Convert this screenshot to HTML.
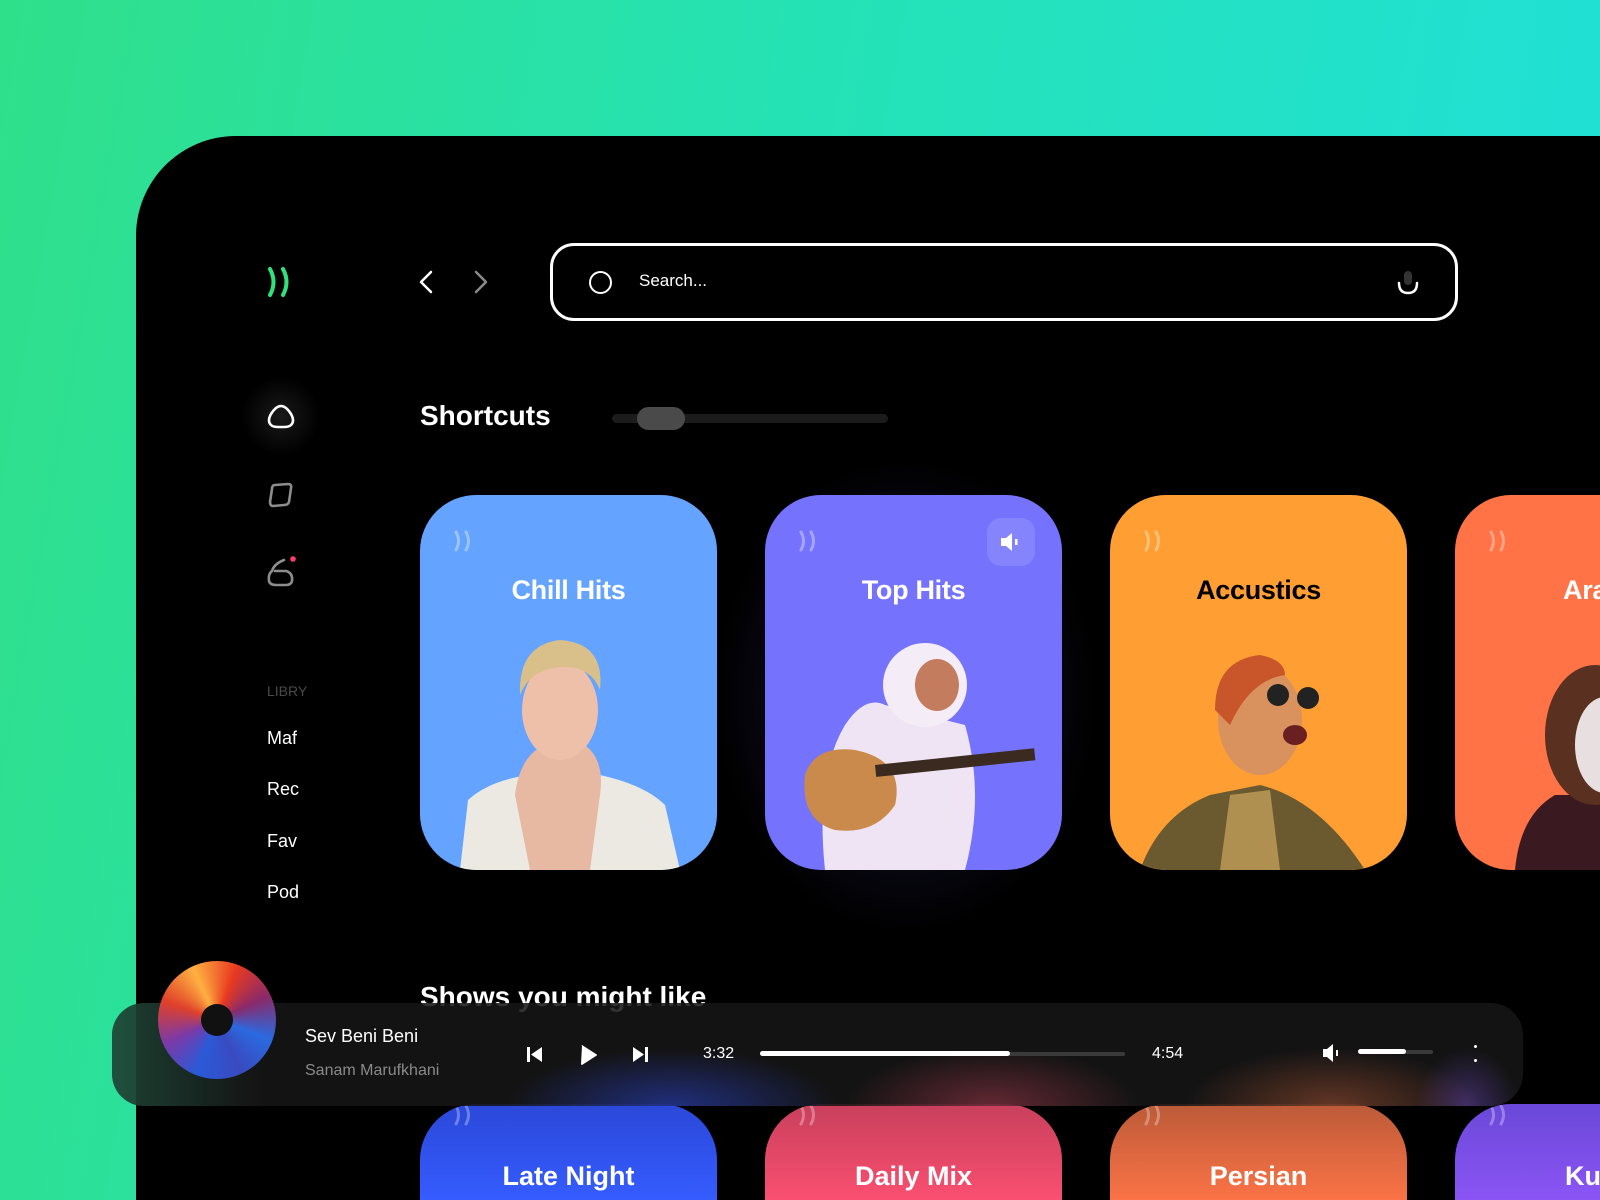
<!DOCTYPE html>
<html style="width:1600px;height:1200px;overflow:hidden"><head><meta charset="utf-8"><style>
*{margin:0;padding:0;box-sizing:border-box}
body{width:1600px;height:1200px;overflow:hidden;position:relative;background:linear-gradient(100deg,#2fe08a 0%,#25e2b5 45%,#1fe0dc 100%);font-family:"Liberation Sans",sans-serif}
.panel{position:absolute;left:136px;top:136px;width:1464px;height:1064px;background:#000;border-radius:100px 0 0 0;overflow:hidden}
.abs{position:absolute}
.card{position:absolute;top:359px;width:297px;height:375px;border-radius:56px;overflow:hidden}
.card h3{position:absolute;left:0;right:0;top:80px;text-align:center;color:#fff;font-size:27px;font-weight:bold;letter-spacing:-0.3px}
.card .w{position:absolute;left:32px;top:34px}
.bc{position:absolute;top:968px;width:297px;height:96px;border-radius:56px 56px 0 0;overflow:hidden}
.bc h3{position:absolute;left:0;right:0;top:57px;text-align:center;color:#fff;font-size:27px;font-weight:bold}
.bc .w{position:absolute;left:32px;top:-1px}
.lib{position:absolute;left:131px;color:#fff;font-size:18px}
</style></head><body>
<div class="panel">
 <svg class="abs" style="left:125px;top:130px" width="40" height="32" viewBox="0 0 40 32"><path d="M9 3 Q16 16 9 29" stroke="#2fe27e" stroke-width="4" fill="none" stroke-linecap="round"/><path d="M22 3 Q29 16 22 29" stroke="#2fe27e" stroke-width="4" fill="none" stroke-linecap="round"/></svg>
 <svg class="abs" style="left:280px;top:134px" width="80" height="24" viewBox="0 0 80 24"><path d="M15 2 L5 12 L15 22" stroke="#fff" stroke-width="2.5" fill="none" stroke-linecap="round" stroke-linejoin="round"/><path d="M60 2 L70 12 L60 22" stroke="#8a8a8a" stroke-width="2.5" fill="none" stroke-linecap="round" stroke-linejoin="round"/></svg>
 <div class="abs" style="left:414px;top:107px;width:908px;height:78px;border:3px solid #fff;border-radius:24px"></div>
 <div class="abs" style="left:453px;top:135px;width:23px;height:23px;border:2.5px solid #fff;border-radius:50%"></div>
 <div class="abs" style="left:503px;top:135px;color:#fff;font-size:17px">Search...</div>
 <svg class="abs" style="left:1259px;top:133px" width="26" height="28" viewBox="0 0 26 28"><rect x="9" y="2" width="8" height="14" rx="4" fill="#333"/><path d="M4 14 Q4 24 13 24 Q22 24 22 14" stroke="#fff" stroke-width="2.5" fill="none" stroke-linecap="round"/></svg>
 <div class="abs" style="left:105px;top:240px;width:80px;height:80px;border-radius:50%;background:radial-gradient(circle,rgba(255,255,255,.10),rgba(255,255,255,0) 70%)"></div>
 <svg class="abs" style="left:130px;top:266px" width="30" height="30" viewBox="0 0 30 30"><path d="M15 4 Q20 4 25 12 Q29 19 25 23 Q23 25 18 25 L12 25 Q7 25 5 23 Q1 19 5 12 Q10 4 15 4Z" stroke="#fff" stroke-width="2.6" fill="none"/></svg>
 <svg class="abs" style="left:130px;top:344px" width="30" height="30" viewBox="0 0 30 30"><path d="M9 5 L22 4 Q26 4 25 8 L23 22 Q22 25 18 25 L7 26 Q4 26 4 22 L6 9 Q6 5 9 5Z" stroke="#8d8d8d" stroke-width="2.6" fill="none"/></svg>
 <svg class="abs" style="left:128px;top:418px" width="36" height="36" viewBox="0 0 36 36"><path d="M20 6 Q10 10 8 17 Q4 20 5 27 Q6 31 12 31 L22 31 Q27 31 28 27 Q29 19 22 17 L11 17" stroke="#8d8d8d" stroke-width="2.6" fill="none" stroke-linecap="round"/><circle cx="29" cy="5" r="2.8" fill="#ff3d6e"/></svg>
 <div class="lib" style="top:547px;color:#4a4a4a;font-size:14px">LIBRY</div>
 <div class="lib" style="top:592px">Maf</div>
 <div class="lib" style="top:643px">Rec</div>
 <div class="lib" style="top:695px">Fav</div>
 <div class="lib" style="top:746px">Pod</div>
 <div class="abs" style="left:284px;top:264px;color:#fff;font-size:28px;font-weight:bold">Shortcuts</div>
 <div class="abs" style="left:476px;top:278px;width:276px;height:9px;border-radius:5px;background:#1c1c1c"></div>
 <div class="abs" style="left:501px;top:271px;width:48px;height:23px;border-radius:12px;background:#4a4a4a"></div>
 <div class="abs" style="left:560px;top:300px;width:420px;height:520px;border-radius:60px;background:radial-gradient(ellipse,rgba(110,100,255,.22),rgba(0,0,0,0) 65%)"></div>
 <div class="card" style="left:284px;background:#64a3ff">
  <svg class="w" width="24" height="24" viewBox="0 0 24 24"><path d="M4 3 Q9 12 4 21 M14 3 Q19 12 14 21" stroke="rgba(255,255,255,.35)" stroke-width="3" fill="none" stroke-linecap="round"/></svg>
  <h3>Chill Hits</h3>
  <svg class="abs" style="left:0;top:0" width="297" height="375" viewBox="0 0 297 375">
   <path d="M40 375 L48 305 Q70 285 110 280 L180 280 Q225 290 245 310 L260 375Z" fill="#ece9e2"/>
   <path d="M95 300 Q100 260 125 250 L165 250 Q185 265 180 300 L170 375 L110 375Z" fill="#e7b8a2"/>
   <ellipse cx="140" cy="215" rx="38" ry="50" fill="#eec0aa"/>
   <path d="M100 200 Q98 150 140 145 Q185 148 180 195 Q170 170 140 172 Q110 175 100 200Z" fill="#d9c08a"/>
  </svg>
 </div>
 <div class="card" style="left:629px;background:#7573fd">
  <svg class="w" width="24" height="24" viewBox="0 0 24 24"><path d="M4 3 Q9 12 4 21 M14 3 Q19 12 14 21" stroke="rgba(255,255,255,.35)" stroke-width="3" fill="none" stroke-linecap="round"/></svg>
  <div class="abs" style="left:222px;top:23px;width:48px;height:48px;border-radius:14px;background:rgba(255,255,255,.12)"></div>
  <svg class="abs" style="left:233px;top:35px" width="26" height="24" viewBox="0 0 26 24"><path d="M3 8 H8 L14 3 V21 L8 16 H3Z" fill="#fff"/><rect x="17" y="9" width="2.5" height="6" fill="#fff"/></svg>
  <h3>Top Hits</h3>
  <svg class="abs" style="left:0;top:0" width="297" height="375" viewBox="0 0 297 375">
   <path d="M60 375 Q50 280 80 230 Q100 200 120 210 L200 230 Q220 300 200 375Z" fill="#efe4f4"/>
   <circle cx="160" cy="190" r="42" fill="#f4ecf6"/>
   <ellipse cx="172" cy="190" rx="22" ry="26" fill="#c47c5e"/>
   <path d="M40 280 Q50 250 90 255 Q140 265 130 310 Q110 340 70 335 Q35 325 40 280Z" fill="#c98a4c"/>
   <rect x="110" y="270" width="160" height="12" fill="#3a2a20" transform="rotate(-6 110 270)"/>
  </svg>
 </div>
 <div class="card" style="left:974px;background:#ff9f33">
  <svg class="w" width="24" height="24" viewBox="0 0 24 24"><path d="M4 3 Q9 12 4 21 M14 3 Q19 12 14 21" stroke="rgba(255,255,255,.35)" stroke-width="3" fill="none" stroke-linecap="round"/></svg>
  <h3 style="color:#000">Accustics</h3>
  <svg class="abs" style="left:0;top:0" width="297" height="375" viewBox="0 0 297 375">
   <path d="M30 375 Q50 320 100 300 L150 290 Q210 305 255 375Z" fill="#6b5a30"/>
   <path d="M120 300 L160 295 L170 375 L110 375Z" fill="#b09050"/>
   <ellipse cx="150" cy="225" rx="42" ry="55" fill="#d9925e"/>
   <path d="M105 215 Q105 165 150 160 Q175 165 175 180 Q140 185 120 230Z" fill="#c9562a"/>
   <circle cx="168" cy="200" r="11" fill="#222"/><circle cx="198" cy="203" r="11" fill="#222"/>
   <ellipse cx="185" cy="240" rx="12" ry="10" fill="#6a2020"/>
  </svg>
 </div>
 <div class="card" style="left:1319px;background:#ff7346">
  <svg class="w" width="24" height="24" viewBox="0 0 24 24"><path d="M4 3 Q9 12 4 21 M14 3 Q19 12 14 21" stroke="rgba(255,255,255,.35)" stroke-width="3" fill="none" stroke-linecap="round"/></svg>
  <h3 style="left:108px;text-align:left">Arabic</h3>
  <svg class="abs" style="left:0;top:0" width="297" height="375" viewBox="0 0 297 375">
   <path d="M60 375 Q65 320 100 300 L160 300 L170 375Z" fill="#3a1a20"/>
   <ellipse cx="140" cy="240" rx="50" ry="70" fill="#5a3020"/>
   <ellipse cx="150" cy="250" rx="30" ry="48" fill="#e8e0e0"/>
  </svg>
 </div>
 <div class="abs" style="left:284px;top:845px;color:#fff;font-size:28px;font-weight:bold">Shows you might like</div>
 <div class="bc" style="left:284px;background:linear-gradient(#2b48d8,#355cff)"><svg class="w" width="24" height="24" viewBox="0 0 24 24"><path d="M4 3 Q9 12 4 21 M14 3 Q19 12 14 21" stroke="rgba(255,255,255,.3)" stroke-width="3" fill="none" stroke-linecap="round"/></svg><h3>Late Night</h3></div>
 <div class="bc" style="left:629px;background:linear-gradient(#c8405c,#fa4f70)"><svg class="w" width="24" height="24" viewBox="0 0 24 24"><path d="M4 3 Q9 12 4 21 M14 3 Q19 12 14 21" stroke="rgba(255,255,255,.3)" stroke-width="3" fill="none" stroke-linecap="round"/></svg><h3>Daily Mix</h3></div>
 <div class="bc" style="left:974px;background:linear-gradient(#bb5a38,#fb7346)"><svg class="w" width="24" height="24" viewBox="0 0 24 24"><path d="M4 3 Q9 12 4 21 M14 3 Q19 12 14 21" stroke="rgba(255,255,255,.3)" stroke-width="3" fill="none" stroke-linecap="round"/></svg><h3>Persian</h3></div>
 <div class="bc" style="left:1319px;background:linear-gradient(#6a48d8,#8b55f5)"><svg class="w" width="24" height="24" viewBox="0 0 24 24"><path d="M4 3 Q9 12 4 21 M14 3 Q19 12 14 21" stroke="rgba(255,255,255,.3)" stroke-width="3" fill="none" stroke-linecap="round"/></svg><h3 style="left:110px;text-align:left">Kurdish</h3></div>
</div>
<div class="abs" style="left:112px;top:1003px;width:1411px;height:103px;border-radius:32px;background:rgba(22,22,22,.88);overflow:hidden">
 <div class="abs" style="left:0;top:0;width:150px;height:103px;background:linear-gradient(90deg,rgba(40,120,90,.45),rgba(0,0,0,0))"></div>
 <div class="abs" style="left:380px;top:40px;width:360px;height:63px;background:radial-gradient(ellipse at 50% 100%,rgba(50,80,255,.45),rgba(0,0,0,0) 65%)"></div>
 <div class="abs" style="left:720px;top:40px;width:320px;height:63px;background:radial-gradient(ellipse at 50% 100%,rgba(250,80,110,.35),rgba(0,0,0,0) 65%)"></div>
 <div class="abs" style="left:1060px;top:40px;width:320px;height:63px;background:radial-gradient(ellipse at 50% 100%,rgba(250,120,70,.35),rgba(0,0,0,0) 65%)"></div>
 <div class="abs" style="left:1300px;top:40px;width:111px;height:63px;background:radial-gradient(ellipse at 50% 100%,rgba(140,90,250,.35),rgba(0,0,0,0) 65%)"></div>
</div>
<div class="abs" style="left:158px;top:961px;width:118px;height:118px;border-radius:50%;background:conic-gradient(from 200deg,#2a5ad8,#7a3aa8,#e0402a,#ffb040,#e83a20,#8a2a6a,#2a6ae0,#3a4ac0,#2a5ad8)"></div>
<div class="abs" style="left:201px;top:1004px;width:32px;height:32px;border-radius:50%;background:#111"></div>
<div class="abs" style="left:305px;top:1026px;color:#fff;font-size:18px">Sev Beni Beni</div>
<div class="abs" style="left:305px;top:1062px;color:#8a8a8a;font-size:16px">Sanam Marufkhani</div>
<svg class="abs" style="left:524px;top:1044px" width="130" height="22" viewBox="0 0 130 22"><rect x="3" y="3" width="3" height="15" fill="#fff"/><path d="M18 3 L7 10.5 L18 18Z" fill="#fff"/><path d="M58 2 Q57 1 58 1 L72 10 Q74 11 72 12 L58 21 Q57 21 57 20Z" fill="#fff"/><path d="M109 3 L120 10.5 L109 18Z" fill="#fff"/><rect x="121" y="3" width="3" height="15" fill="#fff"/></svg>
<div class="abs" style="left:703px;top:1045px;color:#fff;font-size:16px">3:32</div>
<div class="abs" style="left:760px;top:1052px;width:365px;height:4px;border-radius:2px;background:#3a3a3a"></div>
<div class="abs" style="left:760px;top:1051px;width:250px;height:5px;border-radius:3px;background:#fff"></div>
<div class="abs" style="left:1152px;top:1045px;color:#fff;font-size:16px">4:54</div>
<svg class="abs" style="left:1321px;top:1043px" width="24" height="20" viewBox="0 0 24 20"><path d="M2 6 H6 L12 1 V19 L6 14 H2Z" fill="#fff"/><rect x="15" y="7" width="2" height="6" fill="#fff"/></svg>
<div class="abs" style="left:1358px;top:1050px;width:75px;height:4px;border-radius:2px;background:#3a3a3a"></div>
<div class="abs" style="left:1358px;top:1049px;width:48px;height:5px;border-radius:3px;background:#fff"></div>
<div class="abs" style="left:1474px;top:1045px;width:3px;height:3px;border-radius:50%;background:#fff"></div>
<div class="abs" style="left:1474px;top:1059px;width:3px;height:3px;border-radius:50%;background:#fff"></div>
</body></html>
